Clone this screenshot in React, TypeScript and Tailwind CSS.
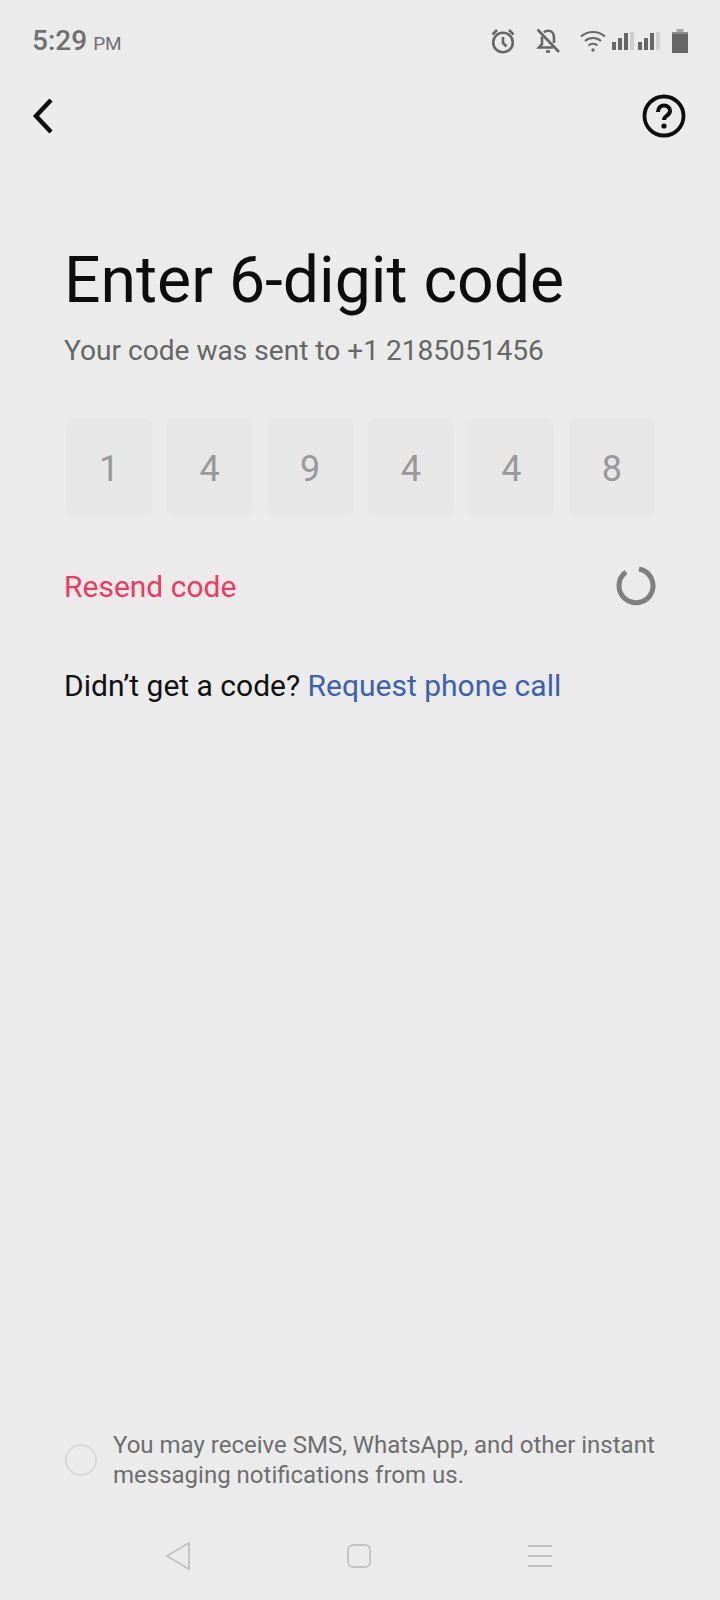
const code = ['1', '4', '9', '4', '4', '8']

export default function App() {
  return (
    <div className="flex h-[1600px] w-[720px] flex-col overflow-hidden bg-[#ebebeb] font-['Roboto',sans-serif]">
      {/* status bar */}
      <div className="flex h-[80px] items-center justify-between pl-[32px] pr-[32px] pt-[2px]">
        <div className="flex items-baseline gap-[6px] text-[#707070]">
          <span className="text-[28px] font-medium">5:29</span>
          <span className="text-[19px]">PM</span>
        </div>
        <div className="flex items-center text-[#666666]">
          <svg width="24" height="26" viewBox="0 0 24 26" fill="none" stroke="currentColor" strokeWidth="2.600">
            <circle cx="12" cy="14.500" r="9.800" />
            <path d="M12 9v6l3.500 3.500M1.500 6.500 6 2M22.500 6.500 18 2" />
          </svg>
          <svg className="ml-[21px]" width="24" height="26" viewBox="0 0 24 26" fill="none" stroke="currentColor" strokeWidth="2.600">
            <path d="M6 8.500V16l-3 3.500h14" />
            <path d="M8 4.500C9 3.300 10.500 2.800 12 2.800c4 0 6 3 6 6.500V15" />
            <path d="M1.500 1.500 23 24" />
            <path d="M10 23.500h4" />
          </svg>
          <svg className="ml-[20px]" width="26" height="22" viewBox="0 0 26 22" fill="none" stroke="currentColor" strokeWidth="2">
            <path d="M1 6.500c6.500-6 17.500-6 24 0M5 11c4.500-4 11.500-4 16 0M8.500 15.500c2.500-2.200 6.500-2.200 9 0" />
            <circle cx="13" cy="20" r="1.700" fill="currentColor" stroke="none" />
          </svg>
          <svg className="ml-[6px]" width="48" height="18" viewBox="0 0 48 18">
            <path d="M0 10h4v8H0zM6 6h4v12H6zM12 1h4v17h-4z" fill="currentColor" />
            <path d="M18 0h4v18h-4z" fill="#cfcfcf" />
            <path d="M26 10h4v8h-4zM32 6h4v12h-4zM38 1h4v17h-4z" fill="currentColor" />
            <path d="M44 0h4v18h-4z" fill="#cfcfcf" />
          </svg>
          <svg className="ml-[12px]" width="16" height="24" viewBox="0 0 16 24">
            <path d="M4.500 0h7v3h-7z" fill="#a8a8a8" />
            <path d="M0 3h16v2H0z" fill="#8c8c8c" />
            <path d="M0 5h16v19H0z" fill="#666666" />
          </svg>
        </div>
      </div>

      {/* top nav */}
      <div className="flex h-[72px] items-center justify-between pl-[31px] pr-[34px]">
        <svg width="26" height="38" viewBox="0 0 26 38" fill="none" stroke="#0d0d0d" strokeWidth="4.500">
          <path d="M20 3 5 19l15 16" />
        </svg>
        <svg width="44" height="44" viewBox="0 0 44 44" fill="none">
          <circle cx="22" cy="22" r="19.500" stroke="#0d0d0d" strokeWidth="3.800" />
          <path d="M16 18c0-4 2.700-6.500 6-6.500s6 2.300 6 5.500c0 4.500-6 4.500-6 9" stroke="#0d0d0d" strokeWidth="4" />
          <circle cx="22" cy="32" r="2.600" fill="#0d0d0d" />
        </svg>
      </div>

      {/* main */}
      <div className="flex flex-1 flex-col pl-[64px] pr-[64px] pt-[92px]">
        <h1 className="h-[72px] whitespace-nowrap text-[64.300px] leading-[72px] font-normal text-[#0d0d0d]">Enter 6-digit code</h1>
        <p className="mt-[17px] whitespace-nowrap text-[28.100px] leading-[36px] text-[#666666]">
          Your code was sent to +1 2185051456
        </p>

        <div className="mt-[49px] flex justify-between pl-[2px] pr-[1px]">
          {code.map((digit, i) => (
            <div
              key={i}
              className="flex h-[98px] w-[86px] items-center justify-center rounded-[8px] bg-[#e7e7e7] pt-[4px] text-[36px] text-[#999999]"
            >
              {digit}
            </div>
          ))}
        </div>

        <div className="mt-[49px] flex h-[42px] items-center justify-between">
          <span className="text-[30px] text-[#ee3a62]">Resend code</span>
          <svg className="mr-[-1px]" width="42" height="42" viewBox="0 0 42 42" fill="none">
            <path d="M24 4a17 17 0 1 1-13 3" stroke="#7f7f7f" strokeWidth="5" />
          </svg>
        </div>

        <p className="mt-[58px] whitespace-nowrap text-[30px] leading-[42px] text-[#111111]">
          Didn’t get a code? <span className="text-[#3c62ab]">Request phone call</span>
        </p>

        {/* consent */}
        <div className="ml-[1px] mr-[-10px] mt-auto flex items-center gap-[16px]">
          <div className="h-[32px] w-[32px] shrink-0 rounded-full border-[2px] border-[#d8d8d8]" />
          <p className="text-[24px] leading-[30px] text-[#6e6e6e]">
            You may receive SMS, WhatsApp, and other instant messaging notifications from us.
          </p>
        </div>
      </div>

      {/* nav bar */}
      <div className="mb-[28px] mt-[50px] flex h-[32px] items-center justify-between pl-[165px] pr-[167px]">
        <svg width="26" height="30" viewBox="0 0 26 30" fill="none" stroke="#c4c4c4" strokeWidth="2">
          <path d="M24 2 2 15l22 13z" />
        </svg>
        <svg width="26" height="26" viewBox="0 0 26 26" fill="none" stroke="#c4c4c4" strokeWidth="2">
          <rect x="2" y="2" width="22" height="22" rx="5" />
        </svg>
        <svg width="26" height="24" viewBox="0 0 26 24" fill="none" stroke="#c4c4c4" strokeWidth="2">
          <path d="M1 2h24M1 12h24M1 22h24" />
        </svg>
      </div>
    </div>
  )
}
